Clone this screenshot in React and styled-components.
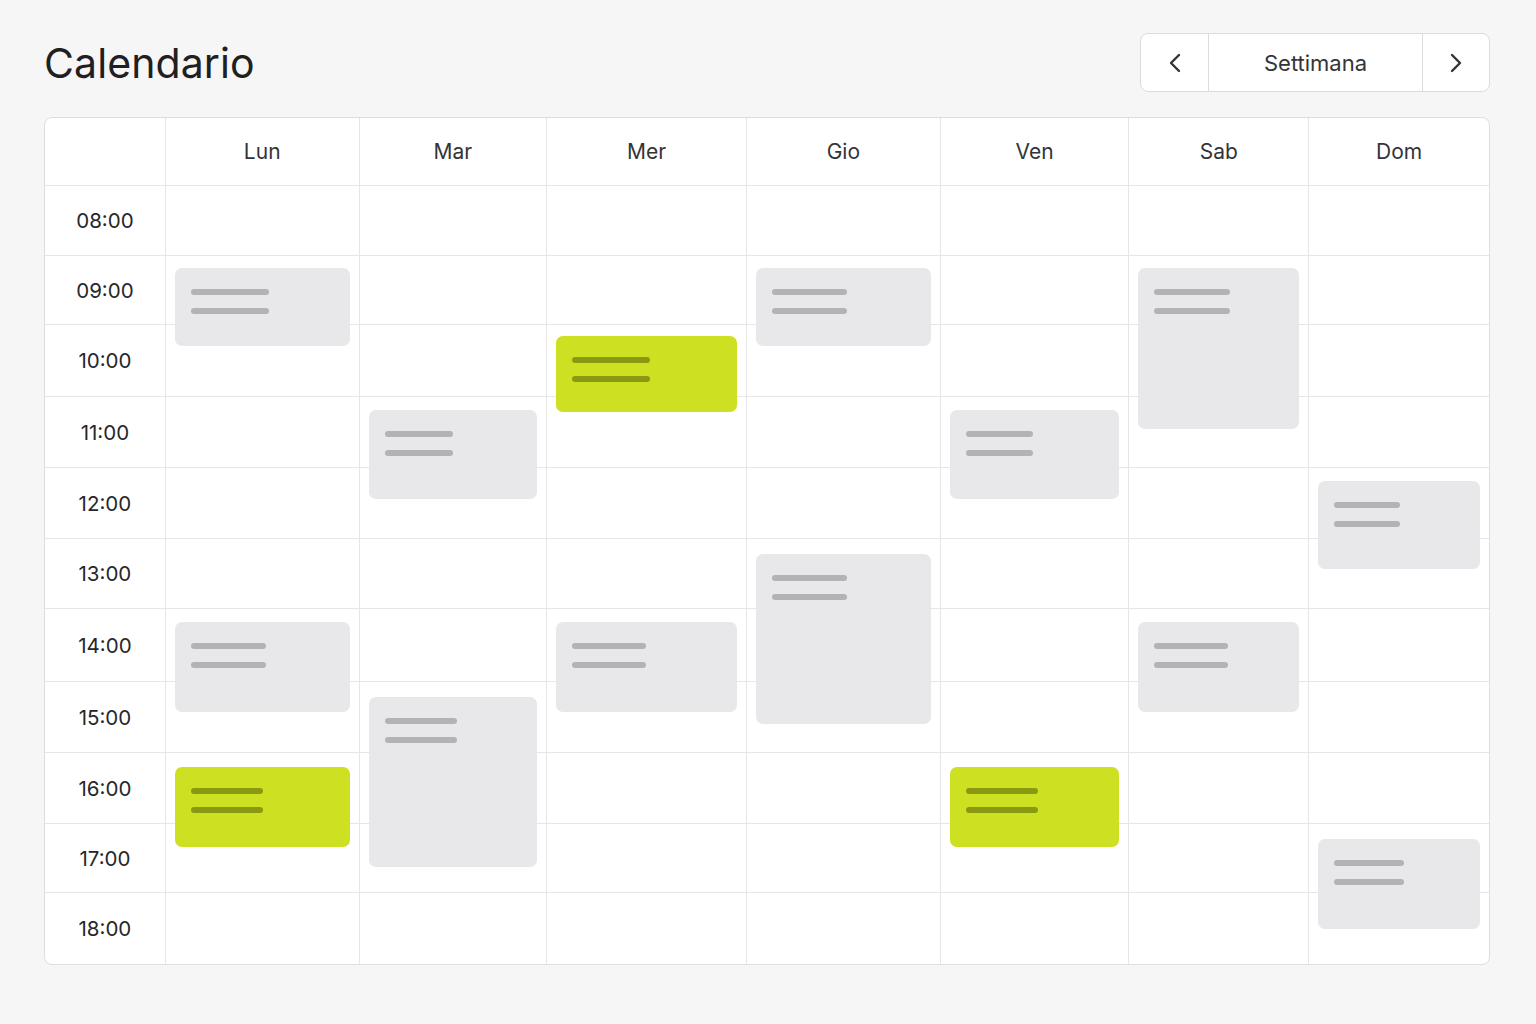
import React from 'react';
import styled, { createGlobalStyle } from 'styled-components';
import { ChevronLeft, ChevronRight } from 'lucide-react';

const GlobalStyle = createGlobalStyle`
  html, body {
    margin: 0;
    background: #f6f6f7;
    font-family: Inter, 'Noto Sans', 'Liberation Sans', sans-serif;
    color: #222326;
  }
`;

const Page = styled.div`
  padding: 33px 46px 60px 44px;
`;

const TopBar = styled.header`
  display: flex;
  align-items: center;
  justify-content: space-between;
  height: 59px;
  margin-bottom: 25px;
`;

const Title = styled.h1`
  margin: 0;
  font-size: 41px;
  font-weight: 400;
  letter-spacing: 0.1px;
  color: #1f2022;
`;

const Switcher = styled.div`
  display: flex;
  height: 59px;
  background: #fff;
  border: 1px solid #dcdcdf;
  border-radius: 8px;
  overflow: hidden;
  box-sizing: border-box;
`;

const NavButton = styled.button`
  width: ${({ $wide }) => ($wide ? '214px' : '67px')};
  display: flex;
  align-items: center;
  justify-content: center;
  border: none;
  background: transparent;
  padding: 0;
  font-family: inherit;
  font-size: 22px;
  color: #333438;
  & + & {
    border-left: 1px solid #dcdcdf;
  }
`;

const Board = styled.div`
  display: grid;
  grid-template-columns: 120fr 194fr 188fr 200fr 194fr 189fr 180fr 181fr;
  grid-template-rows: 68px 778px;
  background: #fff;
  border: 1px solid #dedee1;
  border-radius: 8px;
  overflow: hidden;
`;

const HeadCell = styled.div`
  display: flex;
  align-items: center;
  justify-content: center;
  font-size: 21px;
  color: #333438;
  border-bottom: 1px solid #e6e6e9;
  border-left: ${({ $first }) => ($first ? 'none' : '1px solid #e6e6e9')};
`;

const Column = styled.div`
  position: relative;
  display: grid;
  grid-template-rows: 69px 69px 72px 71px 71px 70px 73px 71px 71px 69px 72px;
  border-left: ${({ $first }) => ($first ? 'none' : '1px solid #e6e6e9')};
`;

const Slot = styled.div`
  display: flex;
  align-items: center;
  justify-content: center;
  font-size: 20.5px;
  color: #26272a;
  border-top: ${({ $first }) => ($first ? 'none' : '1px solid #e6e6e9')};
`;

const Event = styled.div`
  position: absolute;
  left: 9px;
  right: 9px;
  box-sizing: border-box;
  padding: 21px 16px 0;
  border-radius: 7px;
  background: ${({ $accent }) => ($accent ? '#cde021' : '#e8e8ea')};
  display: flex;
  flex-direction: column;
  gap: 13px;
`;

const Bar = styled.span`
  display: block;
  height: 6px;
  border-radius: 3px;
  background: ${({ $accent }) => ($accent ? '#899a12' : '#b3b3b6')};
`;

const days = ['Lun', 'Mar', 'Mer', 'Gio', 'Ven', 'Sab', 'Dom'];
const hours = ['08:00', '09:00', '10:00', '11:00', '12:00', '13:00', '14:00', '15:00', '16:00', '17:00', '18:00'];

// top / height in px from the start of 08:00, bar = width of the placeholder lines
const events = {
  Lun: [
    { top: 82, height: 78, bar: 78 },
    { top: 436, height: 90, bar: 75 },
    { top: 581, height: 80, bar: 72, accent: true },
  ],
  Mar: [
    { top: 224, height: 89, bar: 68 },
    { top: 511, height: 170, bar: 72 },
  ],
  Mer: [
    { top: 150, height: 76, bar: 78, accent: true },
    { top: 436, height: 90, bar: 74 },
  ],
  Gio: [
    { top: 82, height: 78, bar: 75 },
    { top: 368, height: 170, bar: 75 },
  ],
  Ven: [
    { top: 224, height: 89, bar: 67 },
    { top: 581, height: 80, bar: 72, accent: true },
  ],
  Sab: [
    { top: 82, height: 161, bar: 76 },
    { top: 436, height: 90, bar: 74 },
  ],
  Dom: [
    { top: 295, height: 88, bar: 66 },
    { top: 653, height: 90, bar: 70 },
  ],
};

export default function App() {
  return (
    <Page>
      <GlobalStyle />
      <TopBar>
        <Title>Calendario</Title>
        <Switcher>
          <NavButton aria-label="Precedente">
            <ChevronLeft size={32} strokeWidth={1.8} />
          </NavButton>
          <NavButton $wide>Settimana</NavButton>
          <NavButton aria-label="Successiva">
            <ChevronRight size={32} strokeWidth={1.8} />
          </NavButton>
        </Switcher>
      </TopBar>

      <Board>
        <HeadCell $first />
        {days.map((d) => (
          <HeadCell key={d}>{d}</HeadCell>
        ))}

        <Column $first>
          {hours.map((h, i) => (
            <Slot key={h} $first={i === 0}>{h}</Slot>
          ))}
        </Column>
        {days.map((d) => (
          <Column key={d}>
            {hours.map((h, i) => (
              <Slot key={h} $first={i === 0} />
            ))}
            {events[d].map((ev, i) => (
              <Event key={i} $accent={ev.accent} style={{ top: ev.top, height: ev.height }}>
                <Bar $accent={ev.accent} style={{ width: ev.bar }} />
                <Bar $accent={ev.accent} style={{ width: ev.bar }} />
              </Event>
            ))}
          </Column>
        ))}
      </Board>
    </Page>
  );
}
